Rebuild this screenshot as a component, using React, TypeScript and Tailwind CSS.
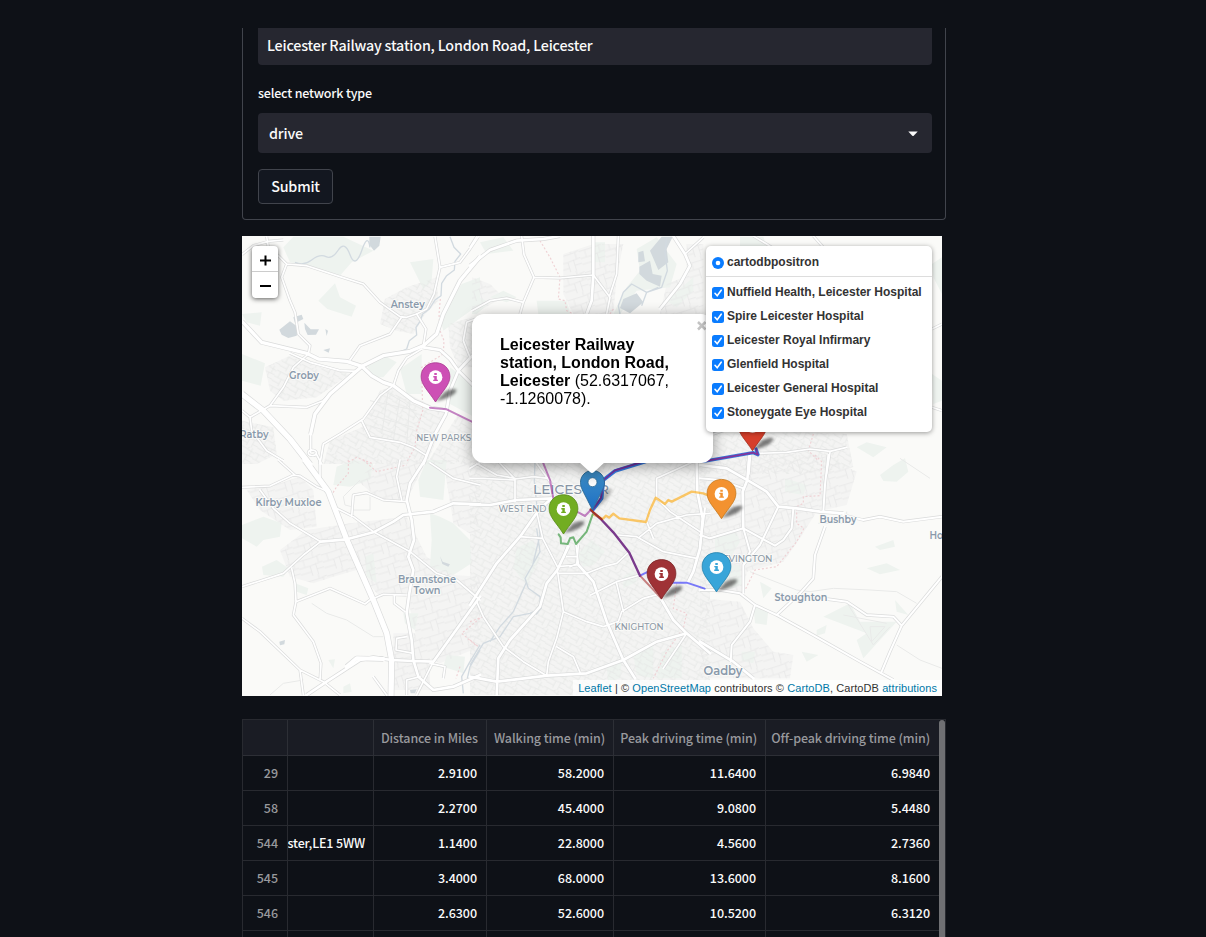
import React from "react";

type Tile = "a" | "b" | "c" | "d" | "e" | "f";
type Shape = { t: Tile; d: string; w?: number };

const origin: Record<Tile, [number, number]> = {
  a: [240, 234], b: [470, 234], c: [700, 234],
  d: [240, 460], e: [470, 455], f: [700, 455],
};
const place = (t: Tile) => `translate(${origin[t][0]} ${origin[t][1]}) scale(0.33333)`;

const parks: Shape[] = [
  { t: "a", d: "M130 40L160 8H310L400 50 335 85 300 125 200 95 150 85ZM235 200L285 148 300 190 348 215 335 248 262 225ZM6 360L75 388 62 455 6 440ZM600 250L665 150 720 130 720 210 650 260 610 290ZM375 385L440 368 470 385 430 430 400 430ZM480 405L545 360V480H500ZM630 400L696 450V545L630 510ZM6 240L65 235 60 275 20 265ZM510 85L580 75 575 140 550 165Z" },
  { t: "b", d: "M200 200H290L300 240H205ZM60 190L100 170 140 190 110 205ZM370 25H405V85H370ZM500 45L560 10 620 90 600 160 500 170 450 240H430L470 160 510 110ZM590 200L670 130V170L620 220ZM6 180L60 205 20 240H6ZM30 25L100 10 130 50 50 60Z" },
  { t: "c", d: "M120 8H190L200 36H120ZM696 90L726 70V180L700 130ZM696 420L726 440V500L700 510ZM470 640L500 625 560 640 520 670Z" },
  { t: "d", d: "M290 20L340 0 400 10 390 60 330 80 280 75ZM535 60L560 0H620L610 120 540 110ZM570 160L600 170 640 190 690 240 695 310 640 345 570 320 575 240ZM6 195L70 170 125 190 120 230 70 240 50 260 6 235ZM66 320L110 300 145 325 130 350 70 345ZM165 370L205 385 200 405 170 395ZM490 460H535L525 510 495 490ZM620 585L675 590 670 640 610 620ZM265 600L285 598 280 625ZM310 680L330 670 335 695 310 700ZM375 290L400 280 410 370 380 350Z" },
  { t: "e", d: "M320 300L365 255 405 290 370 330 340 335ZM490 600L550 570 550 670 500 660ZM575 590L635 570V670H560ZM410 640L455 620 450 670 415 680ZM460 365L490 345 500 380 460 400ZM140 280L190 255 210 310 170 390 130 340Z" },
  { t: "f", d: "M540 60L580 30 615 10 625 50 590 80 550 78ZM255 70L320 90 310 120 255 110ZM525 275L580 255 585 275 540 285ZM500 340L560 325 600 345 540 358ZM45 240L110 230 120 260 90 310 45 290ZM370 485L450 445 480 500 590 500 490 610 470 555 500 535ZM160 450L205 465 200 510 165 505ZM350 525L380 510 375 535 350 542ZM125 590L165 590 160 625 125 618ZM305 590L355 600 320 620ZM585 435L625 480 590 470ZM180 380L215 400 190 430ZM50 330L120 330 125 390 80 405 50 385ZM560 690L600 675 620 690Z" },
];

const urban: Shape[] = [
  { t: "a", d: "M435 195L500 160 590 130 595 200 555 240 520 300 470 290 420 270ZM75 400L150 365 240 400 330 420 230 490 130 500 90 470ZM365 580L420 470 460 455 620 540 560 690H250L270 620ZM625 270L696 250V400L655 400 630 340ZM6 560L100 580 110 660 50 690H6ZM655 540L696 570V690H560Z" },
  { t: "b", d: "M280 60L370 30H460L440 130 430 240H310L280 180ZM590 150L640 130 700 130V240H570ZM6 130L60 150 100 190 20 235H6ZM650 30H700V140H650Z" },
  { t: "c", d: "M0 600L300 595 440 600 460 700 300 720H0Z" },
  { t: "d", d: "M350 60L420 0H560L500 120 420 120ZM120 270L200 210 330 190 500 170 560 290 640 345 720 350V560L600 610 540 580 500 400 420 410 350 330 280 350 220 370 150 350ZM20 90L120 70 180 50 220 90 230 200 150 210 60 150ZM610 0H720V240L640 190ZM460 520H570V690H460Z" },
  { t: "e", d: "M0 20H720V720H0Z" },
  { t: "f", d: "M0 20L160 0 370 0 470 50 440 150 350 170 300 250 250 320 140 350 130 420 0 400ZM0 430L120 440 160 520 220 590 280 600 270 670H0Z" },
];

const water: Shape[] = [
  { t: "a", d: "M118 287L150 262 175 280 170 305 145 312 125 302ZM160 250L185 242 190 255 165 268ZM193 266L212 286 237 286 228 302 203 303 195 285ZM388 8H422L418 35 402 50 388 32ZM256 285L264 290 260 306ZM250 348L270 343 266 356Z" },
  { t: "b", d: "M540 50L575 8H608L590 45 595 85 565 108ZM505 55L520 50 525 82 505 85ZM508 98L540 80 548 120 575 125 570 158 530 140 508 120ZM460 195L500 178 520 205 480 238 450 222Z" },
  { t: "d", d: "M118 545L135 540 133 553 120 556ZM600 288L608 305 630 313 625 320 607 312ZM510 690L530 688 525 700H512Z" },
  { t: "e", d: "M190 470L215 440 215 460 200 480Z" },
];

const rivers: Shape[] = [
  { t: "a", d: "M165 85Q190 97 215 78T258 68 295 48 330 62 365 50 390 40", w: 4 },
  { t: "a", d: "M630 8L642 40 662 60 645 82 643 108 620 125 605 148 603 185 585 198 568 225 548 240 540 262 528 280 530 303 508 320 500 345 475 355", w: 4 },
  { t: "b", d: "M590 10L585 55 592 110 575 160 530 175 485 150 460 175 445 215 450 240M565 160L530 175 515 215", w: 4 },
  { t: "e", d: "M195 20L193 80 210 240 188 330 165 370 175 400 210 425 212 460 180 475 130 485 90 545 40 565 0 630M190 325L210 290 200 220M170 380L130 470 90 515 60 560", w: 4 },
  { t: "d", d: "M720 555L690 605 665 650 670 700M720 570L690 620 682 655", w: 4 },
];

const roads: Shape[] = [
  { t: "a", w: 10, d: "M6 262L65 325 200 358 235 375 320 382 366 397 395 425 430 445 460 455 520 500 570 522 620 530" },
  { t: "a", w: 10, d: "M212 600L225 540 270 480 366 397 430 365 510 352 550 335 590 300 610 240 660 140 720 68" },
  { t: "a", w: 16, d: "M6 480L70 530 150 615 210 692" },
  { t: "a", w: 5, d: "M80 8L85 40 115 65 140 90 200 95 300 128 370 150 420 205 480 248 500 250 530 240 560 225 582 180 600 100 585 8M6 62L40 35 85 22 130 18M140 90L125 130 150 200 165 235 175 300 210 335 205 360 160 400 130 460 90 515 30 550 6 530M30 550L35 590 80 650 130 680M90 515L200 520 250 500 290 460M485 250L450 300 360 335 330 378M150 358L210 385 300 410 350 412M545 345L500 372 475 410 460 455M530 240L558 285 550 335M460 455L420 485 370 555 300 600 250 630 240 690M365 560L390 610 480 625 520 640 560 665M600 100L660 85 690 45 715 8M720 250L680 265 670 320 690 370 655 410" },
  { t: "a", w: 8, d: "M550 340L600 348 630 375 655 410 630 470 618 540 585 600 550 690M655 410L700 362M655 410L700 455" },
  { t: "a", w: 5, d: "M212 600V655M205 655A12 8 0 1 0 229 658A12 8 0 1 0 205 655M229 660L245 690" },
  { t: "b", w: 8, d: "M0 95L60 48 140 20 220 15 270 6M370 6L370 123 365 200 350 240M610 6L645 60 660 95 630 150 570 225" },
  { t: "b", w: 5, d: "M155 6L162 62 192 130 160 205 150 240M192 130L270 132 370 123M370 123L420 190 410 240M418 188L440 120 445 6M645 60L700 10M6 230L60 200 110 192 160 205M20 8L0 40" },
  { t: "c", w: 5, d: "M160 6L200 30 215 40M340 6L370 40M696 285L726 270M696 520L726 530M176 658L260 655 330 645 390 652 440 640M390 655L380 720M40 600L100 580 180 600" },
  { t: "c", w: 9, d: "M150 660L145 720" },
  { t: "d", w: 16, d: "M195 0L265 95 320 238 400 420 440 520 455 600 453 708" },
  { t: "d", w: 8, d: "M242 245L320 238 400 217 460 185 490 165 580 155 640 130 720 133M200 705L260 665 360 600 400 592 455 600 520 603 580 605 720 410M555 0L510 70 500 120 515 180 522 240 505 290 520 330 508 400 500 460 515 540 520 600 535 650 580 690 640 680 720 645" },
  { t: "d", w: 12, d: "M320 620L350 595 430 597" },
  { t: "d", w: 5, d: "M6 82L90 78 160 45 180 48 230 80 265 95M6 380L130 340 190 285 242 245M60 90L100 145 150 190 200 220 242 245M270 100L280 140 340 170 400 215 510 275 590 340 650 360 720 420M155 325L165 370 168 425 270 385 375 432 390 420 430 403 500 405M168 425L160 465 220 545 243 610 240 660M6 475L60 515 180 630 250 665 300 705M180 630L190 705M335 170L340 105 380 98 430 120 500 125M570 8L640 55 720 75M480 0L470 50 485 120M463 405V430L495 455M500 530L470 535 468 570 520 580M580 605L530 705M570 610L615 620 610 655M540 650L500 660V705M400 650L440 705M115 0L165 45M240 0V60L265 95" },
  { t: "e", w: 8, d: "M0 450L80 325 150 245 210 160 240 135 280 132M0 148L60 150 140 135 250 130M325 330L370 380 410 500 460 615 495 670M295 275L262 345 230 385 210 455 120 555 85 610 80 720M0 665L80 680 230 662 350 655 460 615 560 560 650 535M575 435L610 495 650 535 720 595M680 20L682 110 698 190 690 280 670 350 655 380" },
  { t: "e", w: 5, d: "M20 25L80 60 135 70 135 140M0 70L40 70 135 75M85 20L135 72 190 65 235 70M20 440L40 485 100 575 160 620 230 662M150 245L218 250 262 335 320 330 325 270M218 250L200 170M262 345L280 470 260 550 235 620 230 662M280 470L350 500 400 515 445 500 455 470 520 430 575 415M262 355H350L400 335 440 325 475 293M362 420L440 380 510 360M440 385L460 470M260 575L310 605 330 652M445 240L500 245 580 290 680 310M510 245L560 205 650 180 720 175M670 20L560 70 560 130M560 130L600 170 660 210 690 230M530 200L550 250M318 270L325 325 300 335M292 275L280 310M290 305H322M200 25L240 80 270 130M0 40L30 22M580 640L650 535" },
  { t: "f", w: 8, d: "M0 30L80 40 150 80 200 110 235 155 290 160 360 170 430 175M0 560L50 590 100 620 160 670M148 0L142 75 128 110 130 220" },
  { t: "f", w: 6, d: "M430 180L490 195 540 185 610 200 726 185M385 0L375 90 370 170M375 215L345 300 340 370 300 415 230 480M0 405L60 405 120 415 165 450 230 480 330 535 480 620 580 675M380 432L440 440 500 480 580 485 605 512M726 365L605 512 570 590 545 650M165 450L150 500 95 570 92 620M130 220L185 250 225 272 250 255 275 220 280 160M130 220L30 250 0 240M130 220L150 290 130 330V415M130 330L180 270 235 155M0 70L60 75 130 100M0 270L15 160" },
];

const thin: Shape[] = [
  { t: "d", d: "M215 430L260 460 320 480 400 530 430 530M90 705L130 670 190 660M360 60L310 110 315 135 335 140M340 150H390V110" },
  { t: "f", d: "M150 350L200 370 290 405 330 410 400 400 510 405 590 410 650 445M600 10L690 70M590 570L660 615 726 640M430 480L560 505M510 515H555L515 560ZM445 450L520 570 570 515M355 205H440V170" },
  { t: "a", d: "M430 470L500 510 540 560M390 500L530 530M380 540L520 580M445 470L425 600M480 490L460 620M510 500L500 630M390 575L500 610" },
];

const borders: Shape[] = [
  { t: "a", d: "M601 195L597 240 600 290 612 320 610 360 545 400 548 530 530 590 525 640 500 685M325 685L350 670 400 690" },
  { t: "b", d: "M210 20L240 70 270 130 265 195 285 200 290 230 310 240M420 240L430 225" },
  { t: "c", d: "M340 600L325 650 355 680" },
  { t: "d", d: "M325 0L325 40 290 80 275 105M370 0L410 35 500 15M720 475L665 520 710 558M660 620L648 655" },
  { t: "e", d: "M620 385L610 460 650 475 640 520 590 590 550 670M0 500L40 485M0 555L25 575" },
  { t: "f", d: "M345 0L365 20 360 122 310 125 310 145 290 155V205L312 220 290 260 230 335 165 345 130 415" },
];

type Label = { x: number; y: number; w: number; text: string; size: number };
const labels: Label[] = [
  { x: 407.7, y: 307.5, w: 34, text: "Anstey", size: 10 },
  { x: 304, y: 378.5, w: 30, text: "Groby", size: 10 },
  { x: 254, y: 438, w: 29, text: "Ratby", size: 10 },
  { x: 288.5, y: 506, w: 66, text: "Kirby Muxloe", size: 10 },
  { x: 427, y: 583.3, w: 58, text: "Braunstone", size: 10 },
  { x: 427, y: 593.7, w: 27, text: "Town", size: 10 },
  { x: 838, y: 523, w: 37, text: "Bushby", size: 10 },
  { x: 801, y: 601, w: 53, text: "Stoughton", size: 10 },
  { x: 723, y: 674.5, w: 39, text: "Oadby", size: 12 },
  { x: 954, y: 538.5, w: 49, text: "Houghton", size: 10 },
];
const districts: Label[] = [
  { x: 443.7, y: 440.5, w: 55, text: "NEW PARKS", size: 9 },
  { x: 522.5, y: 512.3, w: 48, text: "WEST END", size: 9 },
  { x: 639, y: 630.3, w: 49, text: "KNIGHTON", size: 9 },
  { x: 747.5, y: 562, w: 50, text: "EVINGTON", size: 9 },
];

function Basemap() {
  return (
    <>
      <defs>
        <pattern id="streets" width="58" height="50" patternUnits="userSpaceOnUse" patternTransform="rotate(28)">
          <path d="M0 8H30L38 0M0 27H24V50M24 27L58 24M40 24V50M12 8V27M46 0V24M0 42H24M30 8L58 12M40 40H58" fill="none" stroke="#e6e7e6" strokeWidth="2.2" />
        </pattern>
        <pattern id="streets2" width="74" height="66" patternUnits="userSpaceOnUse" patternTransform="rotate(-17)">
          <path d="M0 14H50L74 10M0 36H34V66M34 36L74 32M52 32V66M18 14V36M50 0V14M62 12V32M0 54H34M52 50H74" fill="none" stroke="#e6e7e6" strokeWidth="2.2" />
        </pattern>
      </defs>
      <rect x="242" y="236" width="700" height="460" fill="#fafaf8" />
      {urban.map((s, i) => <path key={i} d={s.d} transform={place(s.t)} fill="#f4f4f3" />)}
      {parks.map((s, i) => <path key={i} d={s.d} transform={place(s.t)} fill="#eef3ef" />)}
      {urban.map((s, i) => <path key={i} d={s.d} transform={place(s.t)} fill={i % 2 ? "url(#streets2)" : "url(#streets)"} />)}
      {water.map((s, i) => <path key={i} d={s.d} transform={place(s.t)} fill="#d2d9dd" />)}
      {rivers.map((s, i) => <path key={i} d={s.d} transform={place(s.t)} fill="none" stroke="#d2dae0" strokeWidth={s.w} strokeLinejoin="round" />)}
      {thin.map((s, i) => <path key={i} d={s.d} transform={place(s.t)} fill="none" stroke="#e9eae9" strokeWidth="3" />)}
      {borders.map((s, i) => <path key={i} d={s.d} transform={place(s.t)} fill="none" stroke="#efd2d5" strokeWidth="3.5" strokeDasharray="6 6" />)}
      {roads.map((s, i) => <path key={i} d={s.d} transform={place(s.t)} fill="none" stroke="#dadbdb" strokeWidth={(s.w ?? 5) + 4} strokeLinejoin="round" />)}
      {roads.map((s, i) => <path key={i} d={s.d} transform={place(s.t)} fill="none" stroke="#ffffff" strokeWidth={(s.w ?? 5)} strokeLinejoin="round" strokeLinecap="round" />)}
      <g fontFamily="Montserrat, Inter, sans-serif" textAnchor="middle" stroke="#fafaf8" strokeWidth="2" paintOrder="stroke" strokeLinejoin="round">
        {labels.map((l) => (
          <text key={l.text} x={l.x} y={l.y} fontSize={l.size} fontWeight="600" fill="#8999ab" textLength={l.w} lengthAdjust="spacingAndGlyphs">{l.text}</text>
        ))}
        {districts.map((l) => (
          <text key={l.text} x={l.x} y={l.y} fontSize={l.size} fontWeight="500" fill="#8d99a6" textLength={l.w} lengthAdjust="spacingAndGlyphs">{l.text}</text>
        ))}
        <text x="571" y="493.5" fontSize="13.5" fontWeight="500" fill="#8794a5" textLength="76" lengthAdjust="spacingAndGlyphs">LEICESTER</text>
      </g>
    </>
  );
}

function Routes() {
  return (
    <g fill="none" strokeLinejoin="round" strokeLinecap="round">
      <g strokeWidth="6" strokeOpacity="0.58">
        <path transform={place("a")} d="M570 521L620 526 700 565" stroke="#9b2c9b" />
        <path transform={place("e")} d="M218 20L240 75 250 130M300 160L325 172 345 183 362 165" stroke="#9b2c9b" />
        <path transform={place("e")} d="M370 178L398 192 408 182 418 188 430 176 448 190 528 201 540 165 557 128 585 147 595 135 605 140 665 110 700 115 740 132" stroke="#ffa500" strokeWidth="7" />
        <path transform={place("e")} d="M368 178L350 230 318 267 310 247 300 250 293 267 273 265 272 247 266 238" stroke="#1c8a24" />
        <path transform={place("e")} d="M510 362L530 352 560 352M606 383H650L704 401" stroke="#2222ff" />
        <path transform={place("e")} d="M510 362L574 430" stroke="#a52a2a" />
      </g>
      <path transform={place("e")} d="M368 165L395 130 400 75 435 48 520 22 545 12" stroke="#3478dc" strokeWidth="11" />
      <path transform={place("e")} d="M368 165L393 128 403 73 435 46 520 20 545 10" stroke="#74309b" strokeWidth="5" />
      <path transform={place("c")} d="M10 682L160 656 174 662 168 645" stroke="#3478dc" strokeWidth="10" />
      <path transform={place("c")} d="M10 682L160 656 174 662 168 645" stroke="#82359b" strokeWidth="5" />
      <path transform={place("e")} d="M362 165L395 195 430 232 478 293 510 362" stroke="#7a3a8c" strokeWidth="7" />
      <path transform={place("e")} d="M362 163L370 172 395 193" stroke="#a5351f" strokeWidth="6" />
    </g>
  );
}

const pins = [
  { x: 435.5, y: 362.3, top: "#cd50b5", rim: "#a8388f" },
  { x: 752.5, y: 411, top: "#d63e2a", rim: "#a23020" },
  { x: 721.5, y: 479, top: "#f39230", rim: "#c77719" },
  { x: 563.5, y: 494.3, top: "#72ad22", rim: "#568a17" },
  { x: 716.5, y: 552.2, top: "#38a5d9", rim: "#2381ac" },
  { x: 661.5, y: 559.2, top: "#9f3236", rim: "#7a2426" },
];

function Pin({ x, y, top, rim }: { x: number; y: number; top: string; rim: string }) {
  return (
    <g transform={`translate(${x} ${y})`}>
      <path d="M0 39L10 29Q20 25 21 28Q20 33 8 37Z" fill="#000" fillOpacity="0.5" filter="url(#soft)" />
      <path d="M0 .4C8.400 .4 14.400 6.500 14.400 14.300C14.400 22.500 7.500 28 0 39.700C-7.500 28-14.400 22.500-14.400 14.300C-14.400 6.500-8.400 .4 0 .4Z" fill={top} stroke={rim} strokeWidth="0.8" />
      <circle cx="0" cy="14.900" r="6.900" fill="#fff" />
      <path d="M-1.200 10.700H1.300V12.700H-1.200ZM-2.200 13.700H1.300V17.400H2.400V18.800H-2.300V17.400H-1.200V15.100H-2.200Z" fill={top} />
    </g>
  );
}

function MapCanvas() {
  return (
    <svg className="block h-[460px] w-[700px]" viewBox="242 236 700 460">
      <defs>
        <filter id="soft" x="-30%" y="-50%" width="160%" height="200%"><feGaussianBlur stdDeviation="1.8 1.4" /></filter>
        <linearGradient id="blue" x1="0" y1="0" x2="0" y2="1"><stop offset="0" stopColor="#3f8fc6" /><stop offset="1" stopColor="#1d6fc4" /></linearGradient>
      </defs>
      <Basemap />
      <Routes />
      {pins.map((p) => <Pin key={p.x} {...p} />)}
      <g transform="translate(592.5 470)">
        <path d="M0 40L8 24Q20 14 19 22Q15 32 0 40Z" fill="#000" fillOpacity="0.25" filter="url(#soft)" />
        <path d="M0 .5C7 .5 12 6 12 12.500C12 18 9.500 20.500 0 40C-9.500 20.500-12 18-12 12.500C-12 6-7 .5 0 .5Z" fill="url(#blue)" stroke="#2e6c97" />
        <circle cy="12.200" r="4.500" fill="#fff" stroke="#2e6c97" strokeWidth=".8" />
      </g>
    </svg>
  );
}

const hospitals = [
  "Nuffield Health, Leicester Hospital", "Spire Leicester Hospital", "Leicester Royal Infirmary",
  "Glenfield Hospital", "Leicester General Hospital", "Stoneygate Eye Hospital",
];

function MapPanel() {
  return (
    <div className="relative mt-4 h-[460px] w-[700px] overflow-hidden font-['Liberation_Sans',Arial,sans-serif]">
      <MapCanvas />
      <div className="absolute left-[230px] top-[78px] h-[149px] w-[241px] drop-shadow-[0_3px_7px_rgba(0,0,0,0.4)]">
        <div className="h-full rounded-xl bg-white pl-[28px] pt-[22px] text-[16px] leading-[18px] text-black">
          <div className="whitespace-nowrap"><b>Leicester Railway<br />station, London Road,<br />Leicester</b> (52.6317067,<br />-1.1260078).</div>
        </div>
        <svg className="absolute left-[107px] top-[148px]" width="26" height="12"><path d="M0 0H26L15 10Q13 12 11 10Z" fill="#fff" /></svg>
        <svg className="absolute left-[225px] top-[7px]" width="10" height="10"><path d="M1 1L8.500 8.500M8.500 1L1 8.500" stroke="#c3c3c3" strokeWidth="2.500" /></svg>
      </div>
      <div className="absolute left-[10px] top-[10px] flex w-[26px] flex-col rounded bg-white shadow-[0_1px_5px_rgba(0,0,0,0.65)]">
        <div className="flex h-[26px] items-center justify-center border-b border-[#ccc]"><svg width="12" height="12" className="relative top-px"><path d="M1 6.500H12M6.500 1.500V11.500" stroke="#000" strokeWidth="2" /></svg></div>
        <div className="flex h-[26px] items-center justify-center"><svg width="12" height="12" className="relative top-px"><path d="M1 6H12" stroke="#000" strokeWidth="2" /></svg></div>
      </div>
      <div className="absolute left-[464px] top-[10px] h-[186px] w-[226px] rounded-[5px] bg-white text-[12px] font-bold text-[#333] shadow-[0_1px_5px_rgba(0,0,0,0.4)]">
        <div className="flex h-[30px] items-center gap-[3px] pl-[6px] pt-px">
          <svg width="12" height="12" className="relative top-[1px]"><circle cx="6" cy="6" r="6" fill="#0a7cff" /><circle cx="6" cy="6" r="2.300" fill="#fff" /></svg>
          <span>cartodbpositron</span>
        </div>
        <div className="mb-[3px] border-t border-[#ddd]" />
        {hospitals.map((name) => (
          <div key={name} className="flex h-6 items-center gap-[3px] whitespace-nowrap pl-[6px]">
            <svg width="12" height="12" className="relative top-[1px]"><rect width="12" height="12" rx="2.500" fill="#0a7cff" /><path d="M3 6.300L5.200 8.800 9.200 3.200" fill="none" stroke="#fff" strokeWidth="1.600" strokeLinecap="round" /></svg>
            <span>{name}</span>
          </div>
        ))}
      </div>
      <div className="absolute bottom-0 right-0 h-[16px] whitespace-nowrap bg-white/70 px-[5px] text-[11px] leading-[16px] tracking-[0.085px] text-[#333]">
        <span className="text-[#0078a8]">Leaflet</span> | © <span className="text-[#0078a8]">OpenStreetMap</span> contributors © <span className="text-[#0078a8]">CartoDB</span>, CartoDB <span className="text-[#0078a8]">attributions</span>
      </div>
    </div>
  );
}

const rows = [
  ["29", "", "2.9100", "58.2000", "11.6400", "6.9840"],
  ["58", "", "2.2700", "45.4000", "9.0800", "5.4480"],
  ["544", "ster,LE1 5WW", "1.1400", "22.8000", "4.5600", "2.7360"],
  ["545", "", "3.4000", "68.0000", "13.6000", "8.1600"],
  ["546", "", "2.6300", "52.6000", "10.5200", "6.3120"],
  ["", "", "", "", "", ""],
];
const heads = ["", "", "Distance in Miles", "Walking time (min)", "Peak driving time (min)", "Off-peak driving time (min)"];

function DataTable() {
  return (
    <div className="mt-[23px] flex h-[230px] w-[704px] border border-b-0 border-[#282a30] text-[12.500px] font-medium">
      <div className="w-[696px]">
        <div className="grid h-[36px] grid-cols-[45px_86px_113px_127px_152px_173px] border-b border-[#2d2f36] bg-[#1a1c24] tracking-[-0.1px] text-[#98999d]">
          {heads.map((h, i) => (
            <div key={i} className="flex items-center justify-end whitespace-nowrap border-r border-[#2d2f36] pr-2 pt-[2px] last:border-r-0 last:pr-[9px]">{h}</div>
          ))}
        </div>
        {rows.map((r, n) => (
          <div key={n} className="grid h-[35px] grid-cols-[45px_86px_113px_127px_152px_173px] border-b border-[#282a30] tracking-[-0.05px] text-[#fafafa]">
            {r.map((c, i) => (
              <div key={i} className={`flex items-center justify-end overflow-hidden whitespace-nowrap border-r border-[#282a30] last:border-r-0 ${i === 0 ? "pr-[9px] text-[#98999d]" : i === 1 ? "pr-2 tracking-[-0.15px]" : "pr-[9px]"}`}>{c}</div>
            ))}
          </div>
        ))}
      </div>
      <div className="w-[6px] rounded-t-full bg-[#6f7073]" />
    </div>
  );
}

export default function App() {
  return (
    <div className="h-[937px] w-[1206px] overflow-hidden bg-[#0e1117] pl-[242px] pt-[28px] font-['Source_Sans_Pro','Noto_Sans_CJK_SC',sans-serif] text-[#fafafa]">
      <div className="flex h-[192px] w-[704px] flex-col rounded-b border border-t-0 border-[#41444c] px-[15px] text-[14.300px] font-medium tracking-[-0.19px]">
        <div className="flex h-[37px] w-[674px] items-center rounded-b bg-[#262730] px-[9px] pb-[3px]">Leicester Railway station, London Road, Leicester</div>
        <div className="mt-[18px] flex h-5 items-center text-[12.500px]">select network type</div>
        <div className="mt-[10px] flex h-10 w-[674px] items-center justify-between rounded bg-[#262730] pl-[11px] pr-[14px]">
          drive
          <svg width="10" height="6" className="relative top-px"><path d="M.3 .5H9.700L5.700 4.800Q5 5.400 4.300 4.800Z" fill="#fafafa" /></svg>
        </div>
        <div className="mt-4 flex h-[35px] w-[75px] items-center justify-center rounded border border-[#41444c] bg-[#131720] pb-[2px]">Submit</div>
      </div>
      <MapPanel />
      <DataTable />
    </div>
  );
}
